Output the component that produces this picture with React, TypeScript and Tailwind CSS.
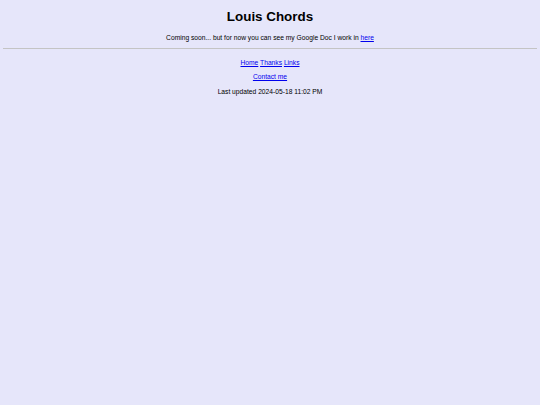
export default function App() {
  return (
    <div
      className="min-h-[405px] bg-[#e6e6fa] px-[3px] pt-[9px] text-black text-center"
      style={{ fontFamily: '"Liberation Sans", Arial, sans-serif' }}
    >
      <h1 className="text-[13.4px] font-bold leading-[15px]">Louis Chords</h1>
      <p className="mt-[10px] text-[6.7px] leading-[8px]">
        Coming soon... but for now you can see my Google Doc I work in{" "}
        <a href="#" className="text-[#0000ee] underline">
          here
        </a>
      </p>
      <hr className="mt-[6px] border-t border-[#c4c4c4]" />
      <div className="mt-[10px] text-[6.7px] leading-[8px]">
        <a href="#" className="text-[#0000ee] underline">Home</a>{" "}
        <a href="#" className="text-[#0000ee] underline">Thanks</a>{" "}
        <a href="#" className="text-[#0000ee] underline">Links</a>
      </div>
      <div className="mt-[6px] text-[6.7px] leading-[8px]">
        <a href="#" className="text-[#0000ee] underline">Contact me</a>
      </div>
      <p className="mt-[7px] text-[6.7px] leading-[8px]">Last updated 2024-05-18 11:02 PM</p>
    </div>
  );
}
